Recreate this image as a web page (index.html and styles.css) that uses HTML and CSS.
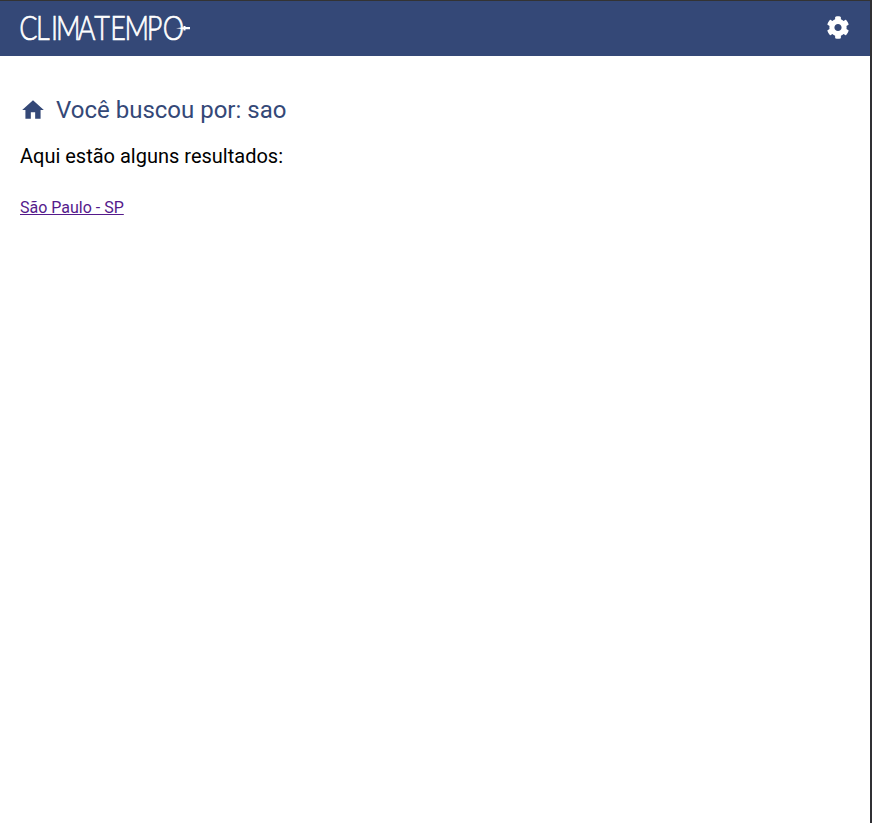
FILE: index.html
```html
<!DOCTYPE html>
<html lang="pt-BR">
<head>
<meta charset="utf-8">
<title>Climatempo</title>
<link rel="stylesheet" href="styles.css">
</head>
<body>
<header class="topbar">
  <svg class="logo" viewBox="0 0 172 40" role="img" aria-label="Climatempo">
    <text class="wordmark" transform="scale(.83 1)" y="33" x="-1 19.200 37.500 43.500 69.500 89.600 108.700 125.800 152.800 172">CLIMATEMPO</text>
    <path class="tail" d="M156 21.200 L163.500 20.200 V19 H165.500 V20 H170 V22.200 H165.500 V23.400 H163.500 V22.200 Z"/>
  </svg>
  <svg class="gear" viewBox="0 0 512 512" aria-hidden="true">
    <path d="M487.400 315.700l-42.600-24.600c4.300-23.200 4.300-47 0-70.200l42.600-24.600c4.900-2.800 7.100-8.600 5.500-14-11.100-35.600-30-67.800-54.700-94.600-3.800-4.100-10-5.100-14.800-2.300L380.800 110c-17.900-15.400-38.500-27.300-60.800-35.100V25.800c0-5.600-3.900-10.500-9.400-11.700-36.700-8.200-74.300-7.800-109.200 0-5.500 1.200-9.400 6.100-9.400 11.700V75c-22.200 7.900-42.800 19.800-60.800 35.100L88.700 85.500c-4.900-2.800-11-1.900-14.800 2.300-24.700 26.700-43.600 58.900-54.700 94.600-1.700 5.400.6 11.200 5.500 14L67.300 221c-4.300 23.200-4.300 47 0 70.200l-42.600 24.600c-4.900 2.800-7.100 8.600-5.500 14 11.100 35.600 30 67.800 54.700 94.600 3.800 4.100 10 5.100 14.800 2.300l42.600-24.600c17.900 15.400 38.500 27.300 60.800 35.100v49.200c0 5.600 3.900 10.500 9.400 11.700 36.700 8.200 74.300 7.800 109.200 0 5.500-1.200 9.400-6.100 9.400-11.700v-49.200c22.200-7.900 42.800-19.800 60.800-35.100l42.600 24.600c4.900 2.800 11 1.900 14.800-2.300 24.700-26.700 43.600-58.900 54.700-94.600 1.500-5.500-.7-11.300-5.600-14.100zM256 336c-44.100 0-80-35.900-80-80s35.900-80 80-80 80 35.900 80 80-35.900 80-80 80z"/>
  </svg>
</header>
<main class="content">
  <h1 class="title">
    <svg class="home" viewBox="0 0 24 24" aria-hidden="true"><path d="M10 20v-6h4v6h5v-8h3L12 3 2 12h3v8z"/></svg>
    <span>Você buscou por: sao</span>
  </h1>
  <p class="subtitle">Aqui estão alguns resultados:</p>
  <a class="result" href="#">São Paulo - SP</a>
</main>
</body>
</html>
```
FILE: styles.css
```css
* { box-sizing: border-box; }
body {
  margin: 0;
  min-height: 823px;
  border-top: 1px solid #333;
  border-right: 2px solid #303034;
  background: #fff;
  font-family: Roboto, sans-serif;
}
.topbar {
  height: 55px;
  padding: 0 20px 3px;
  display: flex;
  align-items: center;
  justify-content: space-between;
  background: #344877;
}
.logo { width: 172px; height: 40px; fill: #fff; overflow: visible; }
.wordmark {
  font-family: Lato, sans-serif;
  font-weight: 300;
  font-size: 32.5px;
  stroke: #fff;
  stroke-width: .7px;
}
.gear { width: 24px; height: 23px; fill: #fff; }
.content { padding: 38px 20px; }
.title {
  display: flex;
  align-items: center;
  gap: 10px;
  height: 32px;
  margin: 0;
  color: #344877;
  font-size: 24px;
  font-weight: 400;
}
.home { width: 26px; height: 26px; fill: #344877; }
.subtitle { margin: 18px 0 30px; font-size: 20px; line-height: 24px; color: #000; }
.result { display: block; width: max-content; font-size: 16px; line-height: 19px; color: #551a8b; text-decoration: underline; }
```
